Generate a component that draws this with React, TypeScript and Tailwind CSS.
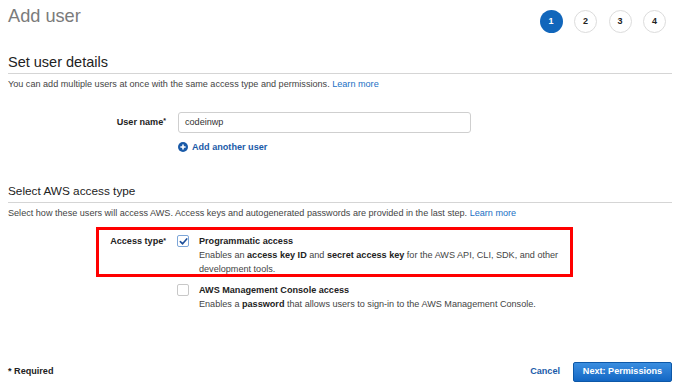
import React from "react";

function Check({ checked }: { checked?: boolean }) {
  return (
    <div
      className={
        "w-[12px] h-[12px] shrink-0 mt-[1px] rounded-[2px] border bg-white flex items-center justify-center " +
        (checked ? "border-[#7da6d8]" : "border-[#c8c8c8]")
      }
    >
      {checked && (
        <svg width="9" height="9" viewBox="0 0 10 10">
          <path d="M1.5 5.2 L4 7.6 L8.6 2.2" fill="none" stroke="#1d4f9a" strokeWidth="1.8" strokeLinecap="round" strokeLinejoin="round" />
        </svg>
      )}
    </div>
  );
}

export default function App() {
  return (
    <div className="relative w-[690px] h-[391px] overflow-hidden bg-white flex flex-col pl-[8px] pr-[18px] pb-[9px] font-['Liberation_Sans',Arial,sans-serif] text-[9.1px] text-[#444]">
      {/* Header */}
      <div className="flex items-start justify-between pt-[4px]">
        <h1 className="text-[18.2px] leading-[24px] text-[#7b7b7b]">Add user</h1>
        <div className="flex gap-[11.5px] mt-[6px] mr-[6px]">
          <div className="w-[23px] h-[23px] rounded-full bg-[#1166bb] text-white font-bold text-[9px] flex items-center justify-center">1</div>
          <div className="w-[23px] h-[23px] rounded-full border border-[#dcdcdc] text-[#222] font-bold text-[9px] flex items-center justify-center">2</div>
          <div className="w-[23px] h-[23px] rounded-full border border-[#dcdcdc] text-[#222] font-bold text-[9px] flex items-center justify-center">3</div>
          <div className="w-[23px] h-[23px] rounded-full border border-[#dcdcdc] text-[#222] font-bold text-[9px] flex items-center justify-center">4</div>
        </div>
      </div>

      {/* Set user details */}
      <div className="mt-[20px] pb-[2px] border-b border-[#d5d5d5]">
        <h2 className="text-[14.5px] leading-[18px] text-[#222]">Set user details</h2>
      </div>
      <p className="mt-[3px] leading-[14px]">
        You can add multiple users at once with the same access type and permissions.{" "}
        <span className="text-[#1a6fc4]">Learn more</span>
      </p>

      <div className="mt-[21px] flex items-center gap-[12px]">
        <div className="w-[158px] text-right font-bold text-[#222]">
          User name<span className="text-[7px] align-top">*</span>
        </div>
        <div className="w-[293px] h-[21px] rounded-[3px] border border-[#cfcfcf] px-[6px] flex items-center text-[#333]">
          codeinwp
        </div>
      </div>
      <div className="mt-[7px] ml-[170px] flex items-center gap-[4px] leading-[14px] font-bold text-[#1a5aa8]">
        <svg width="10" height="10" viewBox="0 0 10 10">
          <circle cx="5" cy="5" r="5" fill="#1a5aa8" />
          <path d="M5 2.4 V7.6 M2.4 5 H7.6" stroke="#fff" strokeWidth="1.6" />
        </svg>
        <span>Add another user</span>
      </div>

      {/* Select AWS access type */}
      <div className="mt-[29px] pb-[3px] border-b border-[#d5d5d5]">
        <h3 className="text-[11.8px] leading-[16px] text-[#222]">Select AWS access type</h3>
      </div>
      <p className="mt-[3px] leading-[14px]">
        Select how these users will access AWS. Access keys and autogenerated passwords are provided in the last step.{" "}
        <span className="text-[#1a6fc4]">Learn more</span>
      </p>

      <div className="mt-[14px] flex items-start leading-[14px]">
        <div className="w-[158px] text-right font-bold text-[#222]">
          Access type<span className="text-[7px] align-top">*</span>
        </div>
        <div className="ml-[11px]">
          <Check checked />
        </div>
        <div className="ml-[10px] w-[380px]">
          <div className="font-bold text-[#222]">Programmatic access</div>
          <div>
            Enables an <b className="text-[#222]">access key ID</b> and <b className="text-[#222]">secret access key</b> for the AWS API, CLI, SDK, and other development tools.
          </div>
        </div>
      </div>

      <div className="mt-[7px] flex items-start leading-[14px]">
        <div className="w-[158px]" />
        <div className="ml-[11px]">
          <Check />
        </div>
        <div className="ml-[10px] w-[380px]">
          <div className="font-bold text-[#222]">AWS Management Console access</div>
          <div>
            Enables a <b className="text-[#222]">password</b> that allows users to sign-in to the AWS Management Console.
          </div>
        </div>
      </div>

      {/* Footer */}
      <div className="mt-auto flex items-center justify-between">
        <div className="font-bold text-[#222]">* Required</div>
        <div className="flex items-center gap-[13px]">
          <span className="font-bold text-[#1a5aa8]">Cancel</span>
          <div className="w-[99px] h-[20px] rounded-[2px] border border-[#0d58a8] bg-gradient-to-b from-[#3a8ee0] to-[#1267c4] text-white font-bold flex items-center justify-center">
            Next: Permissions
          </div>
        </div>
      </div>

      {/* Annotation box */}
      <div className="absolute left-[96px] top-[227px] w-[477px] h-[50px] border-[3px] border-[#ff0000]" />
    </div>
  );
}
